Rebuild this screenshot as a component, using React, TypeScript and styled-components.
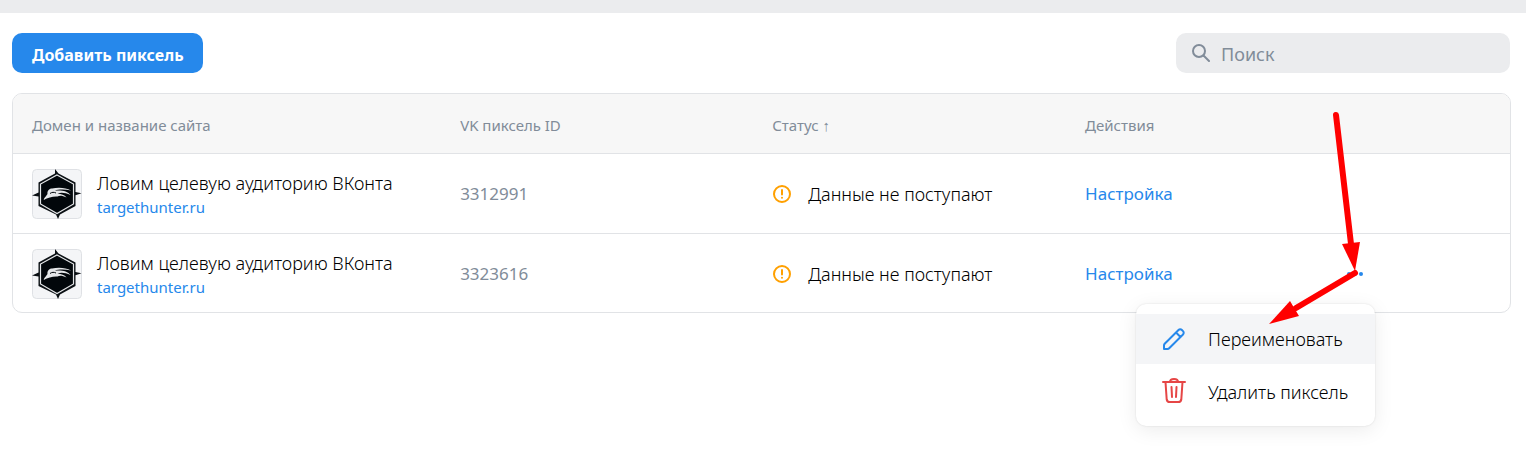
import React from 'react';
import styled, { createGlobalStyle } from 'styled-components';

const Global = createGlobalStyle`
  *, *::before, *::after { box-sizing: border-box; }
  body {
    margin: 0;
    background: #fff;
    color: #000;
    font-family: "Noto Sans", "Open Sans", sans-serif;
    font-size: 18px;
    line-height: 24px;
    font-weight: 300;
  }
  button, input { font: inherit; }
`;

const Shell = styled.div`
  min-height: 100vh;
`;

const TopStrip = styled.div`
  height: 13px;
  background: #ebecee;
`;

const Page = styled.main`
  padding: 20px 15px 20px 12px;
`;

const Toolbar = styled.div`
  display: flex;
  justify-content: space-between;
  align-items: center;
  padding-right: 1px;
  margin-bottom: 20px;
`;

const AddButton = styled.button`
  height: 40px;
  padding: 4px 19px 0 20px;
  border: 0;
  border-radius: 10px;
  background: #2688eb;
  color: #fff;
  font-size: 16px;
  font-weight: 700;
`;

const SearchBox = styled.label`
  display: flex;
  align-items: center;
  gap: 11px;
  width: 334px;
  height: 40px;
  padding: 0 16px;
  border-radius: 10px;
  background: #ebecee;
  color: #818c99;
  svg { flex: none; }
`;

const SearchInput = styled.input`
  flex: 1;
  min-width: 0;
  padding: 2px 0 0;
  border: 0;
  outline: 0;
  background: transparent;
  color: #000;
  font-weight: 400;
  &::placeholder { color: #818c99; opacity: 1; }
`;

const Table = styled.table`
  width: 100%;
  table-layout: fixed;
  border-collapse: separate;
  border-spacing: 0;
  border: 1px solid #e1e3e6;
  border-radius: 10px;
`;

const HeadCell = styled.th<{ $share: string }>`
  width: ${(p) => p.$share};
  height: 60px;
  padding: 2px 19px 0;
  border-bottom: 1px solid #e1e3e6;
  background: #f7f7f7;
  color: #818c99;
  font-size: 15px;
  font-weight: 400;
  text-align: left;
  &:first-child { border-top-left-radius: 9px; }
  &:last-child { border-top-right-radius: 9px; }
`;

const Row = styled.tr`
  &:not(:last-child) > td { border-bottom: 1px solid #e1e3e6; }
  &:last-child > td { height: 78px; padding-top: 2px; }
`;

const Cell = styled.td<{ $muted?: boolean }>`
  height: 80px;
  padding: 0 19px;
  color: ${(p) => (p.$muted ? '#818c99' : '#000')};
  font-size: ${(p) => (p.$muted ? '17px' : '18px')};
  font-weight: ${(p) => (p.$muted ? 400 : 300)};
`;

const Site = styled.div`
  display: flex;
  align-items: center;
  gap: 15px;
`;

const SiteText = styled.div`
  display: flex;
  flex-direction: column;
  padding-top: 2px;
  white-space: nowrap;
`;

const Link = styled.a<{ $small?: boolean }>`
  color: #2688eb;
  font-size: ${(p) => (p.$small ? '15px' : '17px')};
  font-weight: 400;
  text-decoration: none;
`;

const Status = styled.div`
  display: flex;
  align-items: center;
  gap: 16px;
  white-space: nowrap;
`;

const Actions = styled.div`
  display: flex;
  align-items: center;
  justify-content: space-between;
  max-width: 282px;
`;

const MoreWrap = styled.div`
  position: relative;
  display: flex;
`;

const MoreButton = styled.button`
  display: flex;
  width: 24px;
  height: 24px;
  padding: 0;
  border: 0;
  background: transparent;
  color: #2688eb;
`;

const Menu = styled.div`
  position: absolute;
  top: 42px;
  right: -8px;
  z-index: 1;
  display: grid;
  gap: 3px;
  width: 239px;
  padding: 10px 0 9px;
  border-radius: 10px;
  background: #fff;
  box-shadow: 0 0 2px rgba(0, 0, 0, 0.12), 0 4px 20px rgba(0, 0, 0, 0.08);
`;

const MenuItem = styled.button<{ $active?: boolean }>`
  display: flex;
  align-items: center;
  gap: 20px;
  height: 50px;
  padding: 0 24px;
  border: 0;
  background: ${(p) => (p.$active ? '#f4f5f7' : 'transparent')};
  color: #000;
  text-align: left;
  white-space: nowrap;
  svg { flex: none; }
`;

const Arrows = styled.svg`
  position: absolute;
  top: -152px;
  right: -5px;
  z-index: 2;
  overflow: visible;
  pointer-events: none;
`;

const SearchIcon = () => (
  <svg width="18" height="18" viewBox="0 0 18 18" fill="none" stroke="currentColor" strokeWidth="2" strokeLinecap="round" aria-hidden="true">
    <circle cx="7" cy="7" r="6" />
    <path d="M11.5 11.5 17 17" />
  </svg>
);

const Logo = () => (
  <svg width="50" height="50" viewBox="0 0 50 50" aria-hidden="true">
    <rect x="0.5" y="0.5" width="49" height="49" rx="4" fill="#f4f5f7" stroke="#dfe1e5" />
    <path d="M23 0 26.500 4.500 43.500 13.500V23l6 1.300-6 2V37L28 45.500 26 50 24 45.500 6.500 37V27.500L0 26.500l6.500-3V13.500L23 4.500z" fill="#0b1014" />
    <path d="M25 6 41.500 15v20L25 44.500 8.500 35V15z" fill="#02070b" stroke="#e5e7e9" strokeWidth="1.200" />
    <path d="M11.500 31c1-3 3-4 4-6-.5-3 1.500-5.500 4.500-5.500 6-1.500 14-1 19 2-6-1.200-13-1.200-16 .2 6-.7 13 .3 15.500 4.300-5-2.200-9-3-13-1.500 4 .3 7 1.500 9 4-4-2-7-2.200-9-1-5-.3-9 1-14 3.500z" fill="#e5e7e9" />
    <path d="M18 24.500c2-1.500 4-1.500 6-.5" fill="none" stroke="#02070b" />
  </svg>
);

const WarningIcon = () => (
  <svg width="20" height="20" viewBox="0 0 20 20" fill="none" stroke="#ffa000" strokeWidth="2" strokeLinecap="round" aria-hidden="true">
    <circle cx="10" cy="10" r="8" />
    <path d="M10 6v4.500M10 13.700v.1" />
  </svg>
);

const DotsIcon = () => (
  <svg width="24" height="24" viewBox="0 0 24 24" fill="currentColor" aria-hidden="true">
    <circle cx="6" cy="12" r="2" />
    <circle cx="12" cy="12" r="2" />
    <circle cx="18" cy="12" r="2" />
  </svg>
);

const PencilIcon = () => (
  <svg width="28" height="28" viewBox="0 0 28 28" fill="none" stroke="#2688eb" strokeWidth="2" strokeLinejoin="round" aria-hidden="true">
    <path d="M4 24v-3.500q0-1 .7-1.700L18.500 5a2.400 2.400 0 0 1 3.400 0l1.100 1.100a2.400 2.400 0 0 1 0 3.400L9.200 23.300q-.7.7-1.700.7zM16 7.500l4.500 4.500" />
  </svg>
);

const TrashIcon = () => (
  <svg width="28" height="28" viewBox="0 0 28 28" fill="none" stroke="#e64646" strokeWidth="2" strokeLinecap="round" strokeLinejoin="round" aria-hidden="true">
    <path d="M3 4h22M10 4c0-4 8-4 8 0M5.500 4l1.200 17.500a3 3 0 0 0 3 2.500h8.600a3 3 0 0 0 3-2.500L22.500 4M11.500 9l.5 10M16.500 9l-.5 10" />
  </svg>
);

const PointerArrows = () => (
  <Arrows width="100" height="216" viewBox="0 0 100 216" aria-hidden="true">
    <g fill="red" stroke="red">
      <path d="M64 5 79 134" strokeWidth="6" strokeLinecap="round" fill="none" />
      <path d="M70 134 88 132 83 161z" stroke="none" />
      <path d="M83 163 24 198" strokeWidth="6" strokeLinecap="round" fill="none" />
      <path d="M-3 214 18 191 27 206z" stroke="none" />
    </g>
  </Arrows>
);

const pixels = [
  { id: '3312991', name: 'Ловим целевую аудиторию ВКонта', domain: 'targethunter.ru', menuOpen: false },
  { id: '3323616', name: 'Ловим целевую аудиторию ВКонта', domain: 'targethunter.ru', menuOpen: true },
];

export default function App() {
  return (
    <Shell>
      <Global />
      <TopStrip />
      <Page>
        <Toolbar>
          <AddButton type="button">Добавить пиксель</AddButton>
          <SearchBox>
            <SearchIcon />
            <SearchInput type="text" placeholder="Поиск" aria-label="Поиск" />
          </SearchBox>
        </Toolbar>
        <Table>
          <thead>
            <tr>
              <HeadCell $share="28.6%">Домен и название сайта</HeadCell>
              <HeadCell $share="20.85%">VK пиксель ID</HeadCell>
              <HeadCell $share="20.9%">Статус ↑</HeadCell>
              <HeadCell $share="29.65%">Действия</HeadCell>
            </tr>
          </thead>
          <tbody>
            {pixels.map((pixel) => (
              <Row key={pixel.id}>
                <Cell>
                  <Site>
                    <Logo />
                    <SiteText>
                      <span>{pixel.name}</span>
                      <Link href="#site" $small>{pixel.domain}</Link>
                    </SiteText>
                  </Site>
                </Cell>
                <Cell $muted>{pixel.id}</Cell>
                <Cell>
                  <Status>
                    <WarningIcon />
                    <span>Данные не поступают</span>
                  </Status>
                </Cell>
                <Cell>
                  <Actions>
                    <Link href="#settings">Настройка</Link>
                    {pixel.menuOpen && (
                      <MoreWrap>
                        <MoreButton type="button" aria-label="Ещё">
                          <DotsIcon />
                        </MoreButton>
                        <Menu>
                          <MenuItem type="button" $active>
                            <PencilIcon />
                            Переименовать
                          </MenuItem>
                          <MenuItem type="button">
                            <TrashIcon />
                            Удалить пиксель
                          </MenuItem>
                        </Menu>
                        <PointerArrows />
                      </MoreWrap>
                    )}
                  </Actions>
                </Cell>
              </Row>
            ))}
          </tbody>
        </Table>
      </Page>
    </Shell>
  );
}
